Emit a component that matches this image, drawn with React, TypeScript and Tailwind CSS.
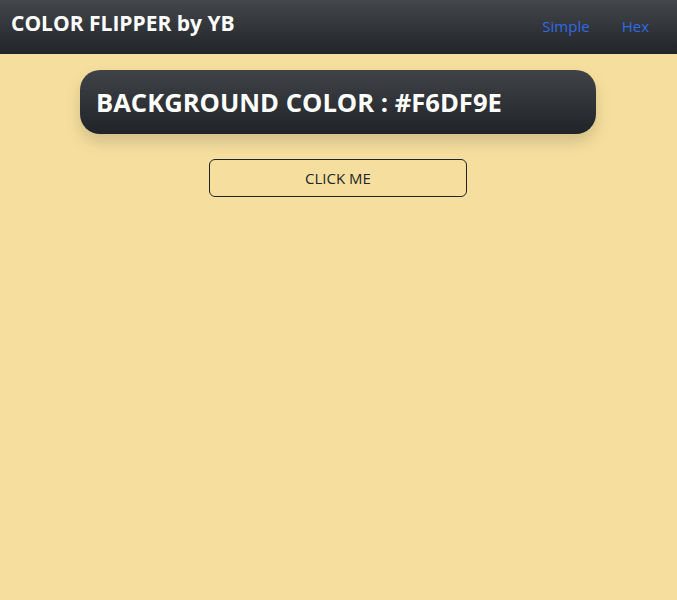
import React, { useState } from 'react';

const colors = ['#F6DF9E', '#A3D9FF', '#F7A1C4', '#B8F2C0', '#FFD6A5', '#CDB4DB'];

const App: React.FC = () => {
  const [color, setColor] = useState('#F6DF9E');

  const flip = () => {
    const next = colors[Math.floor(Math.random() * colors.length)];
    setColor(next);
  };

  return (
    <div
      className="min-h-[600px] w-full font-['Open_Sans','Noto_Sans',sans-serif]"
      style={{ backgroundColor: color }}
    >
      <nav className="h-[54px] flex items-center justify-between bg-gradient-to-b from-[#44474b] to-[#212428] pl-[11px] pr-[28px]">
        <span className="text-white font-bold text-[21px] -mt-[6px]">COLOR FLIPPER by YB</span>
        <div className="flex items-center gap-[32px] text-[15px] text-[#2f6ae8] -mt-[2px]">
          <a href="#">Simple</a>
          <a href="#">Hex</a>
        </div>
      </nav>

      <div className="flex flex-col items-center pt-[16px]">
        <div className="w-[516px] h-[64px] flex items-center px-[16px] pt-[2px] -ml-px rounded-[20px] bg-gradient-to-b from-[#404347] to-[#202327] shadow-[0_8px_16px_rgba(0,0,0,0.15)]">
          <h2 className="text-white font-bold text-[25.6px]">BACKGROUND COLOR : {color}</h2>
        </div>
        <button
          onClick={flip}
          className="mt-[25px] w-[258px] h-[38px] border border-[#212529] rounded-[6px] text-[15px] text-[#212529] -ml-px"
        >
          CLICK ME
        </button>
      </div>
    </div>
  );
};

export default App;
